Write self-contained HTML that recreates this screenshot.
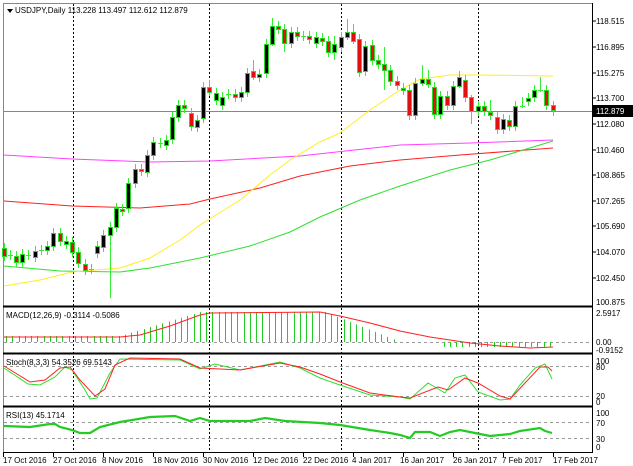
<!DOCTYPE html>
<html><head><meta charset="utf-8"><style>
html,body{margin:0;padding:0;background:#fff;width:633px;height:466px;overflow:hidden}
svg{display:block}
text{font-family:"Liberation Sans",sans-serif;font-size:8px;fill:#000}
</style></head><body>
<svg id="s" width="633" height="466" viewBox="0 0 633 466" xmlns="http://www.w3.org/2000/svg">
<rect x="0" y="0" width="633" height="466" fill="#fff"/>
<g stroke="#000" stroke-width="1" fill="none">
<line x1="3" y1="3.5" x2="592" y2="3.5" stroke="#888"/>
<line x1="3.5" y1="3" x2="3.5" y2="453" stroke="#888"/>
<line x1="592.5" y1="3" x2="592.5" y2="453"/>
<line x1="3" y1="306.5" x2="592" y2="306.5" stroke-width="2"/>
<line x1="3" y1="353.5" x2="592" y2="353.5" stroke-width="2"/>
<line x1="3" y1="406.5" x2="592" y2="406.5" stroke-width="2"/>
<line x1="3" y1="452.5" x2="592" y2="452.5"/>
</g>
<g stroke="#000" stroke-dasharray="2,2" stroke-width="1">
<line x1="73.5" y1="4" x2="73.5" y2="452"/>
<line x1="209.5" y1="4" x2="209.5" y2="452"/>
<line x1="341.5" y1="4" x2="341.5" y2="452"/>
<line x1="478.5" y1="4" x2="478.5" y2="452"/>
</g>
<g stroke="#999" stroke-dasharray="3,3" stroke-width="1">
<line x1="4" y1="342.5" x2="592" y2="342.5"/>
<line x1="4" y1="366.5" x2="592" y2="366.5"/>
<line x1="4" y1="396.5" x2="592" y2="396.5"/>
<line x1="4" y1="422.5" x2="592" y2="422.5"/>
<line x1="4" y1="438.5" x2="592" y2="438.5"/>
</g>
<line x1="4" y1="111.5" x2="592" y2="111.5" stroke="#7a8a99" stroke-width="1"/>
<g fill="none" stroke-width="1">
<polyline stroke="#ff40ff" points="4,155 72,159 150,162 210,161 300,156 400,145 470,143 553,140"/>
<polyline stroke="#ff2020" points="4,201 72,206 140,208 190,204 210,199 260,188 300,176 350,166 400,160 460,155 553,148"/>
<polyline stroke="#30e030" points="4,266 60,271 120,272 150,268 200,258 250,246 290,232 320,217 360,200 400,186 450,170 490,160 553,141"/>
<polyline stroke="#ffee22" points="4,286 40,280 72,272 120,268 150,258 180,240 200,225 240,200 270,175 290,160 320,142 340,133 370,110 400,90 420,79 450,75 478,75 553,76"/>
</g>
<g id="candles"></g>
<g id="macd" stroke="#22cc22" stroke-width="1"></g>
<polyline fill="none" stroke="#ff2020" stroke-width="1" points="4,337 120,337 140,335 170,326 200,315 210,313 320,312 340,316 370,323 400,331 430,337 470,343 500,346 530,348 553,347"/>
<polyline fill="none" stroke="#30dd30" points="4,368 28,384 40,385 55,377 65,367 72,370 85,390 90,399 97,398 110,373 120,359 180,360 200,369 215,364 240,370 280,362 300,368 320,378 340,385 370,395 400,397 410,399 428,383 445,393 455,378 465,375 478,392 500,400 510,399 520,385 535,368 545,364 552,379"/>
<polyline fill="none" stroke="#ff2020" points="4,366 30,382 45,380 60,368 70,367 80,380 95,396 105,389 115,365 130,358 180,359 200,368 240,370 280,363 300,367 320,374 340,382 370,393 400,397 410,398 438,387 448,390 465,378 478,383 500,396 510,399 525,383 540,367 548,367 552,371"/>
<polyline fill="none" stroke="#22cc22" stroke-width="2.2" points="4,426 30,427 50,424 55,424 60,427 72,430 80,433 90,433 100,427 120,422 150,417 175,416 190,421 200,418 210,421 250,421 265,418 285,421 320,423 340,425 370,430 390,433 400,435 410,438 415,432 430,432 440,436 450,432 460,430 475,433 490,436 510,434 520,431 540,428 545,431 552,433"/>
<path d="M7,9 l6,0 l-3,4 z" fill="#000"/>
<text x="15" y="13">USDJPY,Daily  113.228 113.497 112.612 112.879</text>
<text x="6" y="318">MACD(12,26,9) -0.3114 -0.5086</text>
<text x="6" y="365">Stoch(8,3,3) 54.3526 69.5143</text>
<text x="6" y="418">RSI(13) 45.1714</text>
<g stroke="#000"><line x1="592" y1="21" x2="596" y2="21"/><line x1="592" y1="47" x2="596" y2="47"/><line x1="592" y1="73" x2="596" y2="73"/><line x1="592" y1="98" x2="596" y2="98"/><line x1="592" y1="124" x2="596" y2="124"/><line x1="592" y1="150" x2="596" y2="150"/><line x1="592" y1="175" x2="596" y2="175"/><line x1="592" y1="201" x2="596" y2="201"/><line x1="592" y1="226" x2="596" y2="226"/><line x1="592" y1="252" x2="596" y2="252"/><line x1="592" y1="278" x2="596" y2="278"/></g>
<text x="596" y="24">118.515</text>
<text x="596" y="50">116.895</text>
<text x="596" y="76">115.275</text>
<text x="596" y="101">113.700</text>
<rect x="593" y="105" width="40" height="12" fill="#000"/>
<text x="596" y="114" style="fill:#fff">112.879</text>
<text x="596" y="127">112.080</text>
<text x="596" y="153">110.460</text>
<text x="596" y="178">108.865</text>
<text x="596" y="204">107.265</text>
<text x="596" y="229">105.690</text>
<text x="596" y="255">104.070</text>
<text x="596" y="281">102.450</text>
<text x="596" y="305">100.875</text>
<text x="596" y="316">2.5917</text>
<text x="596" y="345">0.00</text>
<text x="596" y="353">-0.9152</text>
<text x="596" y="364">100</text>
<text x="596" y="370">80</text>
<text x="596" y="399">20</text>
<text x="596" y="405">0</text>
<text x="596" y="416">100</text>
<text x="596" y="426">70</text>
<text x="596" y="442">30</text>
<text x="596" y="450">0</text>
<g stroke="#000"><line x1="3.5" y1="453" x2="3.5" y2="457"/><line x1="53.5" y1="453" x2="53.5" y2="457"/><line x1="103.5" y1="453" x2="103.5" y2="457"/><line x1="153.5" y1="453" x2="153.5" y2="457"/><line x1="203.5" y1="453" x2="203.5" y2="457"/><line x1="253.5" y1="453" x2="253.5" y2="457"/><line x1="303.5" y1="453" x2="303.5" y2="457"/><line x1="353.5" y1="453" x2="353.5" y2="457"/><line x1="403.5" y1="453" x2="403.5" y2="457"/><line x1="453.5" y1="453" x2="453.5" y2="457"/><line x1="503.5" y1="453" x2="503.5" y2="457"/><line x1="553.5" y1="453" x2="553.5" y2="457"/></g>
<text x="3" y="463">17 Oct 2016</text>
<text x="53" y="463">27 Oct 2016</text>
<text x="102" y="463">8 Nov 2016</text>
<text x="153" y="463">18 Nov 2016</text>
<text x="203" y="463">30 Nov 2016</text>
<text x="253" y="463">12 Dec 2016</text>
<text x="303" y="463">22 Dec 2016</text>
<text x="352" y="463">4 Jan 2017</text>
<text x="400" y="463">16 Jan 2017</text>
<text x="453" y="463">26 Jan 2017</text>
<text x="502" y="463">7 Feb 2017</text>
<text x="553" y="463">17 Feb 2017</text>
</svg>
<script>
(function(){
var d=[[4,'r',248,256],[10,'s',255,255],[16,'r',256,262],[22,'b',254,262],[28,'s',255,255],[35,'b',251,257],[41,'s',250,250],[47,'b',246,250],[53,'b',233,246],[60,'r',233,241],[66,'b',241,244],[72,'r',242,252],[78,'r',252,263],[85,'r',264,270],[91,'s',269,269],[97,'b',246,253],[103,'b',235,247],[110,'b',227,235,222,298],[116,'b',208,227],[122,'r',209,211],[128,'b',183,208],[135,'b',169,183],[141,'r',169,171],[147,'b',155,172],[153,'b',142,155],[160,'s',143,143],[166,'b',140,145],[172,'b',117,139],[178,'b',105,117],[184,'r',105,108],[191,'r',113,126],[197,'b',120,127],[203,'b',87,118],[209,'r',87,92,80,96],[216,'b',93,100],[222,'b',97,105],[228,'s',94,94],[235,'r',94,97],[241,'b',92,97],[247,'b',73,92],[253,'r',71,77,60,80],[259,'b',74,77],[266,'b',44,73],[272,'b',26,44,18,46],[278,'r',26,29],[284,'r',29,43,24,52],[291,'b',32,43],[297,'r',32,36],[303,'s',36,36],[309,'r',36,39],[316,'b',37,43],[322,'r',38,41],[328,'r',41,52],[334,'b',44,52,36,60],[341,'b',37,47],[347,'b',32,37,19,40],[353,'r',32,41,24,44],[359,'r',39,72],[365,'b',46,71],[372,'r',45,60],[378,'r',60,64],[384,'r',64,70,47,90],[390,'r',70,81],[397,'r',81,85],[403,'r',88,90],[409,'r',90,115],[415,'b',83,115],[422,'b',79,83,65,86],[428,'r',79,84,70,88],[434,'r',87,114],[440,'b',96,114],[447,'r',96,105],[453,'b',86,105],[459,'b',77,86,71,88],[465,'r',80,97],[471,'r',97,111,95,124],[478,'b',106,111],[484,'r',106,111],[490,'r',112,115,100,120],[497,'r',117,129],[503,'b',119,129],[509,'r',120,126],[515,'b',106,126],[522,'s',106,106,97,108],[528,'b',98,101],[534,'b',90,97],[540,'s',90,90,77,92],[546,'r',90,105],[553,'r',105,110,101,116]];
var g=document.getElementById('candles'),h='';
d.forEach(function(c){var x=c[0],t=c[2],b=c[3],wt=c[4]||t-5,wb=c[5]||b+5;
h+='<line x1="'+(x+.5)+'" y1="'+wt+'" x2="'+(x+.5)+'" y2="'+wb+'" stroke="#33ee33" stroke-width="1"/>';
if(c[1]=='s'){h+='<line x1="'+(x-2)+'" y1="'+(t+.5)+'" x2="'+(x+3)+'" y2="'+(t+.5)+'" stroke="#33ee33"/>';}
else{h+='<rect x="'+(x-1.5)+'" y="'+(t+.5)+'" width="4" height="'+Math.max(b-t,2)+'" fill="'+(c[1]=='r'?'#e01010':'#000')+'" stroke="#22dd22" stroke-width="1"/>';}
});
g.innerHTML=h;
var m=document.getElementById('macd'),mh='';
function mtop(x){if(x<120)return 336;if(x<200)return 336-(x-120)*0.3;if(x<325)return 312;if(x<400)return 312+(x-325)*0.4;if(x<440)return 342;return 347;}
for(var x=6;x<=553;x+=6.25){var xx=Math.round(x)+.5,t=mtop(x);mh+='<line x1="'+xx+'" y1="'+t+'" x2="'+xx+'" y2="342"/>';}
m.innerHTML=mh;
})();
</script>
</body></html>
